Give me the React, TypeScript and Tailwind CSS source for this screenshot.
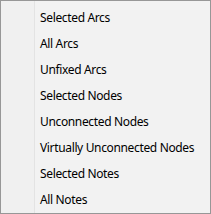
const items = [
  "Selected Arcs",
  "All Arcs",
  "Unfixed Arcs",
  "Selected Nodes",
  "Unconnected Nodes",
  "Virtually Unconnected Nodes",
  "Selected Notes",
  "All Notes",
];

export default function App() {
  return (
    <div className="w-[211px] h-[214px] bg-[#f0f0f0] border border-[#979797] flex font-['Segoe_UI','Noto_Sans',sans-serif] text-[12px] tracking-[-0.35px] text-black">
      <div className="w-[34px] shrink-0 border-r border-[#e3e3e3]" />
      <div className="flex-1 flex flex-col pt-[3.5px] pl-[5px] bg-[#f2f2f2]">
        {items.map((label) => (
          <div key={label} className="h-[26px] flex items-center leading-none whitespace-nowrap">
            {label}
          </div>
        ))}
      </div>
    </div>
  );
}
